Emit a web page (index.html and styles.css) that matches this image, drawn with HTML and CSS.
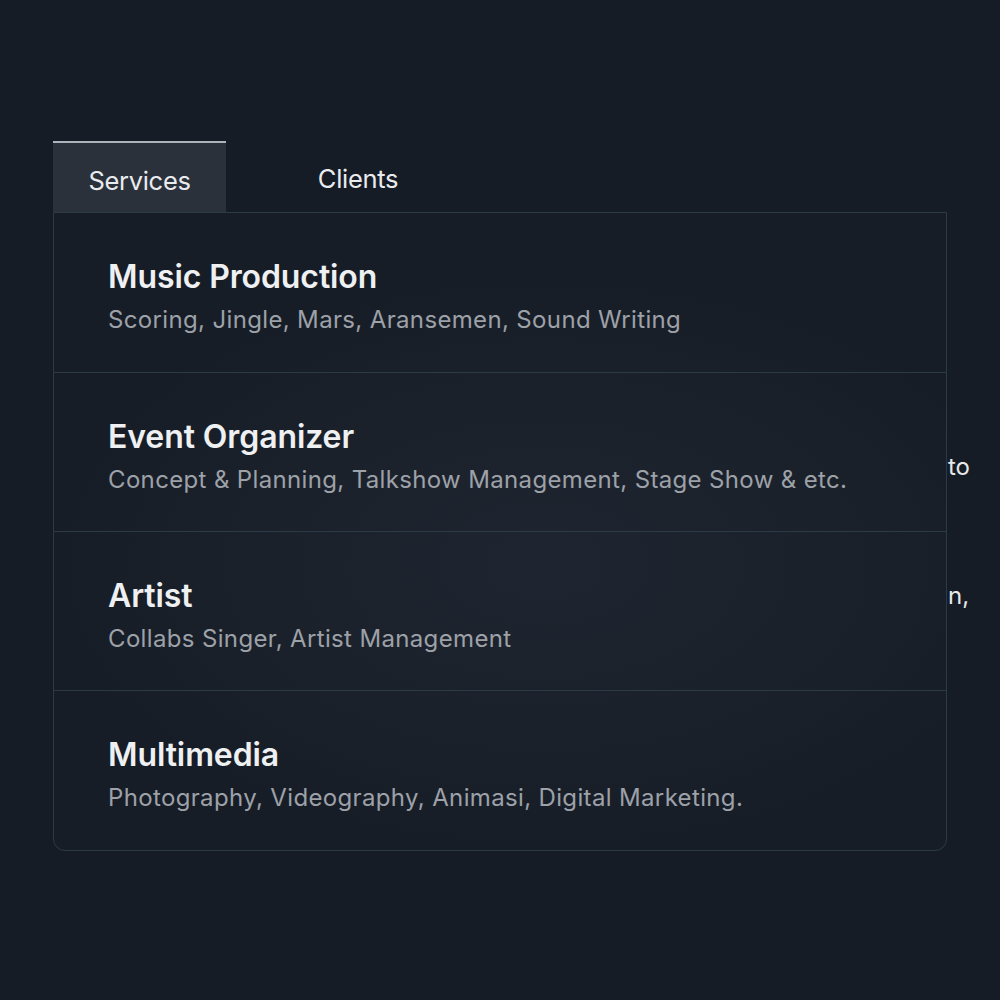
FILE: index.html
```html
<!DOCTYPE html>
<html>
<head>
<meta charset="utf-8">
<link rel="stylesheet" href="styles.css">
</head>
<body>
<div class="stage">
  <div class="backtext">
    <span class="frag frag1">to</span>
    <span class="frag frag2">n,</span>
  </div>
  <div class="widget">
    <div class="tabs">
      <div class="tab active">Services</div>
      <div class="tab">Clients</div>
    </div>
    <div class="panel">
      <div class="row">
        <div class="title">Music Production</div>
        <div class="sub">Scoring, Jingle, Mars, Aransemen, Sound Writing</div>
      </div>
      <div class="row">
        <div class="title">Event Organizer</div>
        <div class="sub">Concept &amp; Planning, Talkshow Management, Stage Show &amp; etc.</div>
      </div>
      <div class="row">
        <div class="title">Artist</div>
        <div class="sub">Collabs Singer, Artist Management</div>
      </div>
      <div class="row">
        <div class="title">Multimedia</div>
        <div class="sub">Photography, Videography, Animasi, Digital Marketing.</div>
      </div>
    </div>
  </div>
</div>
</body>
</html>
```

FILE: styles.css
```css
html, body {
  margin: 0;
  padding: 0;
  background: #161c26;
  font-family: Inter, "Noto Sans", "Liberation Sans", sans-serif;
}
.stage {
  position: relative;
  width: 1000px;
  height: 1000px;
  padding: 141px 53px 0 53px;
  box-sizing: border-box;
}
.backtext {
  position: absolute;
  inset: 0;
  color: #e6e8ea;
  font-size: 24px;
}
.frag {
  position: absolute;
  left: 948px;
}
.frag1 { top: 452px; }
.frag2 { top: 581px; }
.widget {
  position: relative;
  width: 894px;
}
.tabs {
  display: flex;
  height: 71px;
}
.tab {
  width: 173px;
  display: flex;
  align-items: center;
  justify-content: center;
  color: #e9ebee;
  font-size: 25.5px;
  letter-spacing: -0.3px;
  box-sizing: border-box;
  padding-top: 6px;
}
.tab + .tab {
  width: 264px;
  padding-top: 3px;
}
.tab.active {
  background: #2a313b;
  border-top: 2px solid #aeb3ba;
}
.panel {
  border: 1px solid #2c3a47;
  border-radius: 0 0 12px 12px;
  background: radial-gradient(ellipse 55% 45% at 55% 55%, #1f2530 0%, #1b212b 60%, #171d27 100%);
}
.row {
  height: 159px;
  box-sizing: border-box;
  padding: 45px 54px 0 54px;
  border-top: 1px solid #2c3a47;
}
.row:first-child {
  border-top: none;
}
.row:last-child {
  height: 160px;
}
.title {
  color: #eef0f2;
  font-size: 32px;
  font-weight: 600;
  letter-spacing: -0.1px;
  line-height: 38px;
}
.sub {
  color: #9da1a8;
  font-size: 24px;
  letter-spacing: 0.35px;
  line-height: 30px;
  margin-top: 9px;
}
```
